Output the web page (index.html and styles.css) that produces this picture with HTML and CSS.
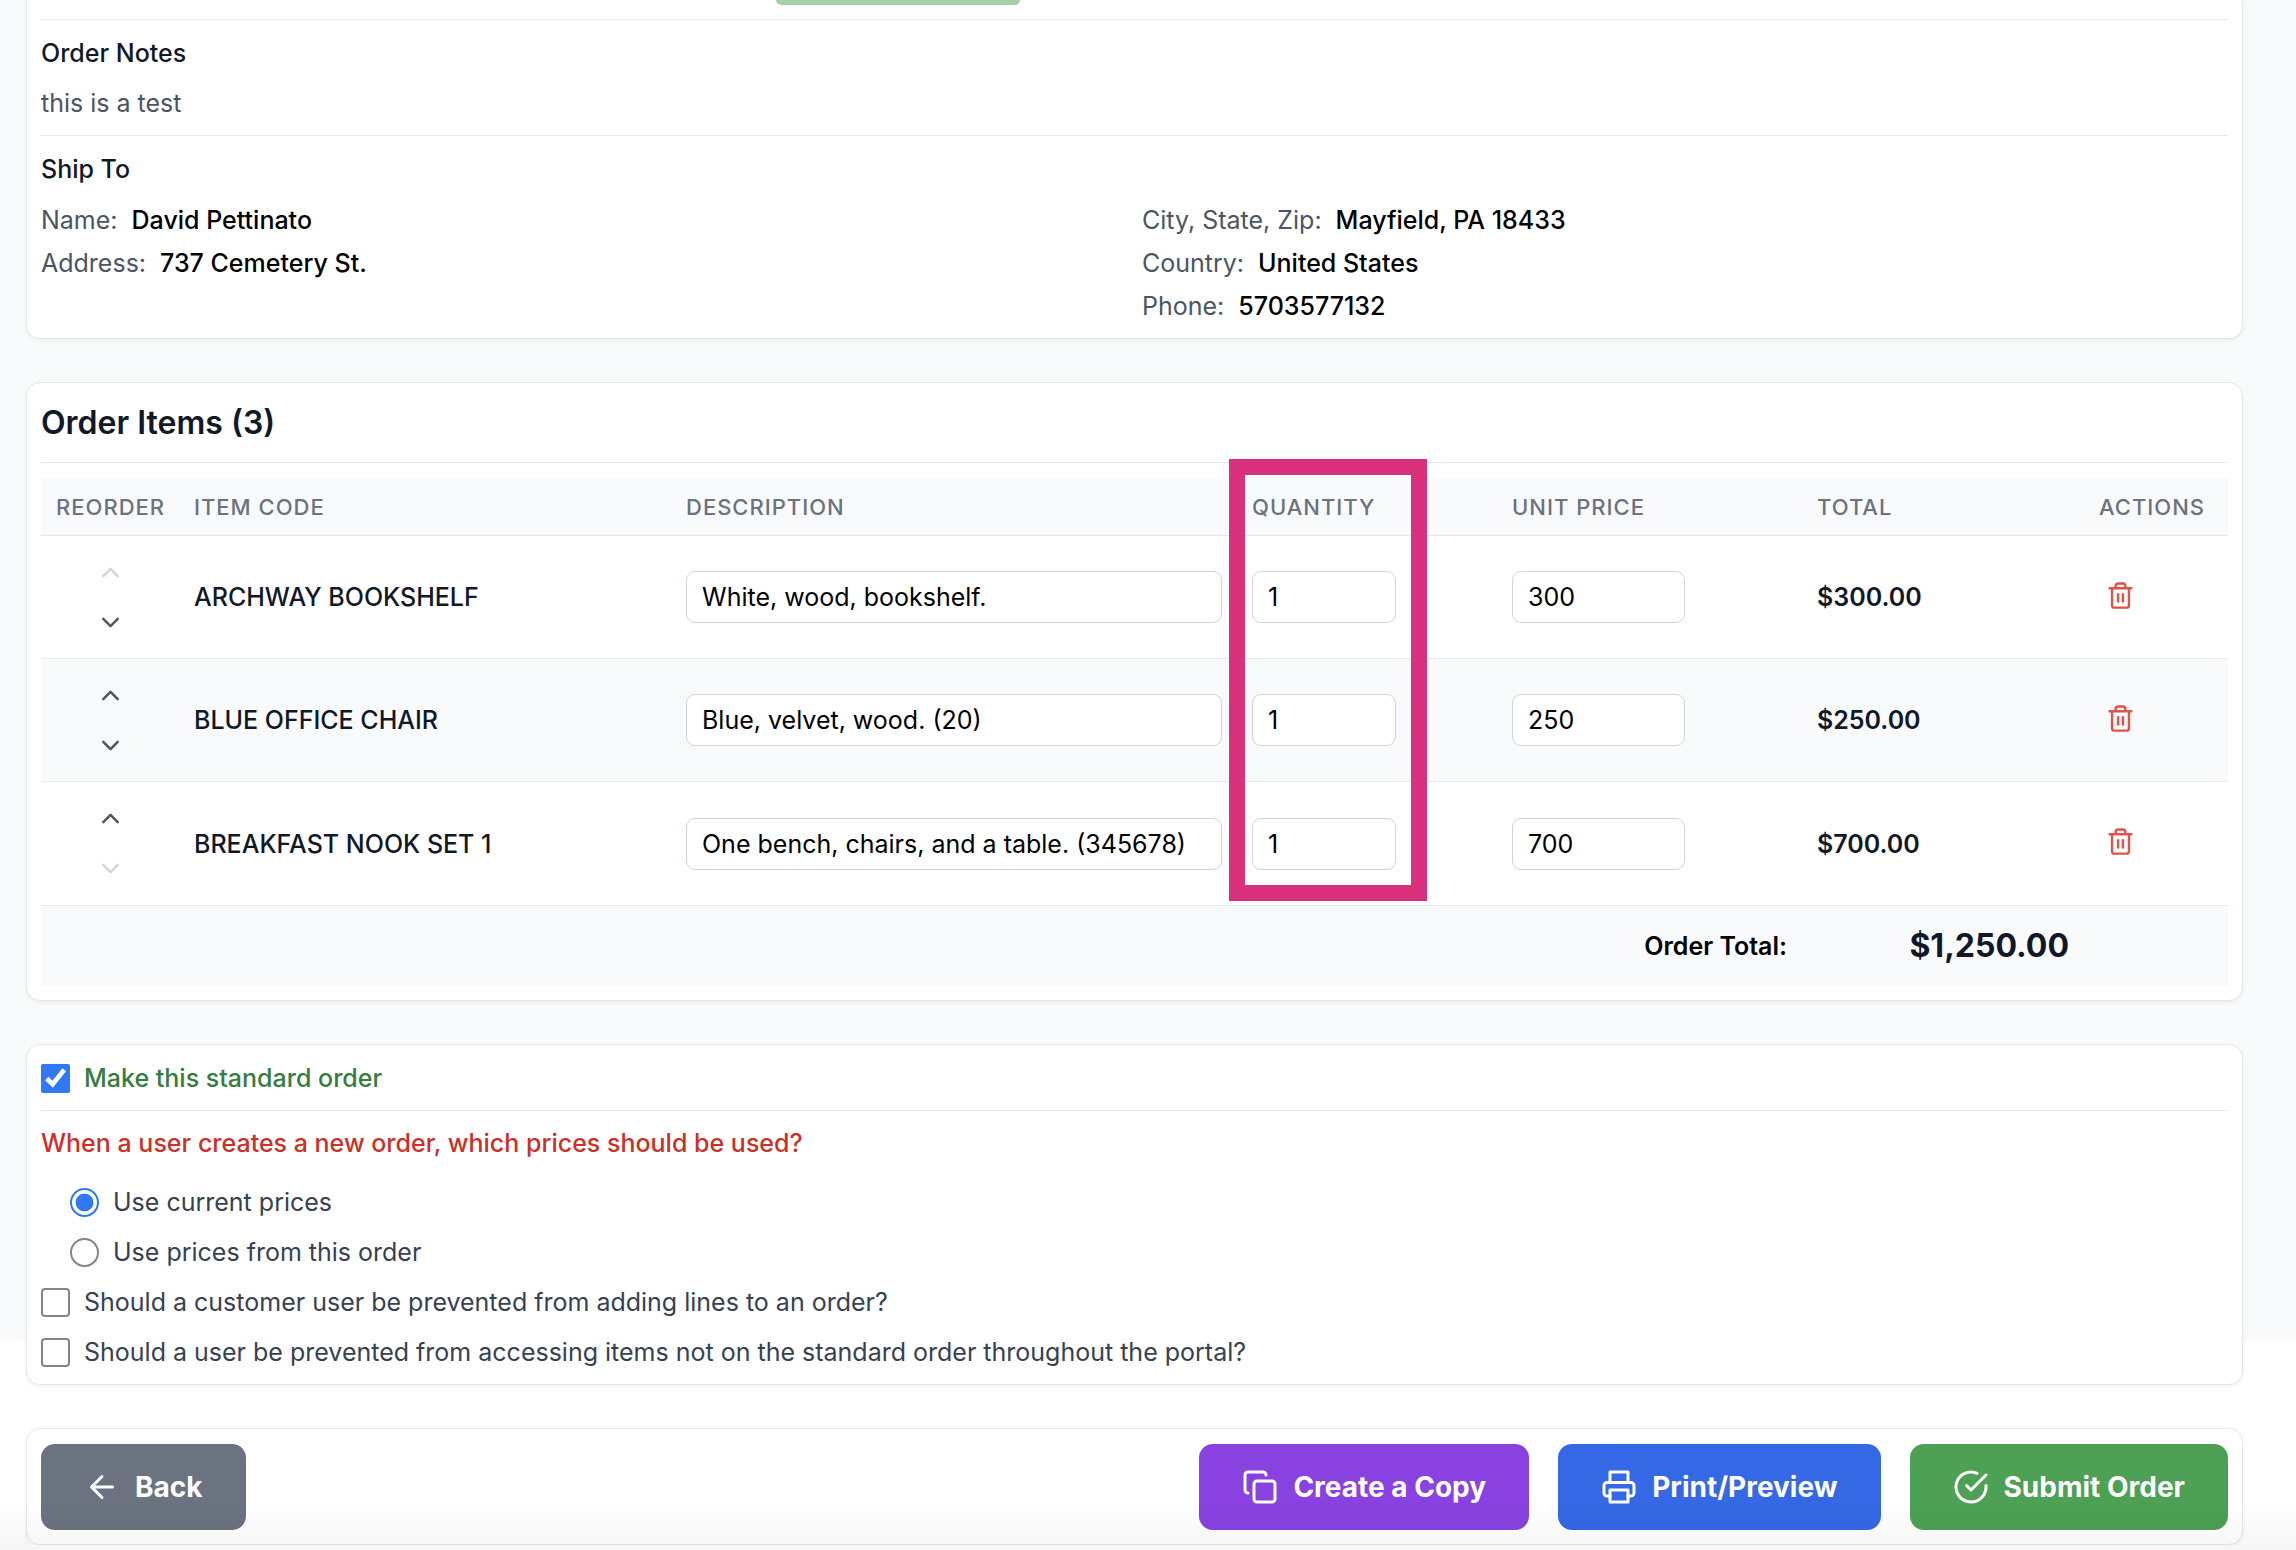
FILE: index.html
```html
<!DOCTYPE html>
<html lang="en">
<head>
<meta charset="utf-8">
<meta name="viewport" content="width=device-width, initial-scale=1">
<title>Order Details</title>
<link rel="stylesheet" href="styles.css">
</head>
<body>
<svg class="sprite" aria-hidden="true">
  <symbol id="up" viewBox="0 0 24 24"><path d="m18 15-6-6-6 6"/></symbol>
  <symbol id="down" viewBox="0 0 24 24"><path d="m6 9 6 6 6-6"/></symbol>
  <symbol id="trash" viewBox="0 0 24 24"><path d="M3 6h18M19 6v14a2 2 0 0 1-2 2H7a2 2 0 0 1-2-2V6M8 6V4a2 2 0 0 1 2-2h4a2 2 0 0 1 2 2v2M10 11v6M14 11v6"/></symbol>
</svg>
<main class="page">
  <section class="card details">
    <div class="status-row"><span class="status"></span></div>
    <div class="block">
      <h3>Order Notes</h3>
      <p class="note">this is a test</p>
    </div>
    <div class="block ship">
      <h3>Ship To</h3>
      <div class="ship-grid">
        <dl>
          <div><dt>Name:</dt><dd>David Pettinato</dd></div>
          <div><dt>Address:</dt><dd>737 Cemetery St.</dd></div>
        </dl>
        <dl>
          <div><dt>City, State, Zip:</dt><dd>Mayfield, PA 18433</dd></div>
          <div><dt>Country:</dt><dd>United States</dd></div>
          <div><dt>Phone:</dt><dd>5703577132</dd></div>
        </dl>
      </div>
    </div>
  </section>

  <section class="card items">
    <h2>Order Items (3)</h2>
    <div class="table-wrap">
      <table>
        <colgroup><col class="c-reorder"><col class="c-code"><col><col class="c-qty"><col class="c-price"><col class="c-total"><col class="c-actions"></colgroup>
        <thead>
          <tr><th>Reorder</th><th>Item Code</th><th>Description</th><th>Quantity</th><th>Unit Price</th><th>Total</th><th>Actions</th></tr>
        </thead>
        <tbody>
          <tr>
            <td><div class="reorder"><button aria-label="Move up" disabled><svg><use href="#up"/></svg></button><button aria-label="Move down"><svg><use href="#down"/></svg></button></div></td>
            <td class="code">ARCHWAY BOOKSHELF</td>
            <td><input class="field desc" type="text" aria-label="Description" value="White, wood, bookshelf."></td>
            <td><input class="field qty" type="text" aria-label="Quantity" value="1"></td>
            <td><input class="field price" type="text" aria-label="Unit price" value="300"></td>
            <td class="total">$300.00</td>
            <td><button class="delete" aria-label="Delete item"><svg><use href="#trash"/></svg></button></td>
          </tr>
          <tr>
            <td><div class="reorder"><button aria-label="Move up"><svg><use href="#up"/></svg></button><button aria-label="Move down"><svg><use href="#down"/></svg></button></div></td>
            <td class="code">BLUE OFFICE CHAIR</td>
            <td><input class="field desc" type="text" aria-label="Description" value="Blue, velvet, wood. (20)"></td>
            <td><input class="field qty" type="text" aria-label="Quantity" value="1"></td>
            <td><input class="field price" type="text" aria-label="Unit price" value="250"></td>
            <td class="total">$250.00</td>
            <td><button class="delete" aria-label="Delete item"><svg><use href="#trash"/></svg></button></td>
          </tr>
          <tr>
            <td><div class="reorder"><button aria-label="Move up"><svg><use href="#up"/></svg></button><button aria-label="Move down" disabled><svg><use href="#down"/></svg></button></div></td>
            <td class="code">BREAKFAST NOOK SET 1</td>
            <td><input class="field desc" type="text" aria-label="Description" value="One bench, chairs, and a table. (345678)"></td>
            <td><input class="field qty" type="text" aria-label="Quantity" value="1"></td>
            <td><input class="field price" type="text" aria-label="Unit price" value="700"></td>
            <td class="total">$700.00</td>
            <td><button class="delete" aria-label="Delete item"><svg><use href="#trash"/></svg></button></td>
          </tr>
        </tbody>
        <tfoot>
          <tr><td colspan="5" class="sum-label">Order Total:</td><td class="sum">$1,250.00</td><td></td></tr>
        </tfoot>
      </table>
      <div class="highlight"></div>
    </div>
  </section>

  <section class="card options">
    <label class="choice standard"><input type="checkbox" checked>Make this standard order</label>
    <fieldset>
      <legend>When a user creates a new order, which prices should be used?</legend>
      <label class="choice nested"><input type="radio" name="prices" checked>Use current prices</label>
      <label class="choice nested"><input type="radio" name="prices">Use prices from this order</label>
    </fieldset>
    <label class="choice"><input type="checkbox">Should a customer user be prevented from adding lines to an order?</label>
    <label class="choice"><input type="checkbox">Should a user be prevented from accessing items not on the standard order throughout the portal?</label>
  </section>

  <section class="card actions">
    <button class="btn back"><svg viewBox="0 0 24 24"><path d="m12 19-7-7 7-7M19 12H5"/></svg>Back</button>
    <button class="btn copy"><svg viewBox="0 0 24 24"><rect x="8" y="8" width="14" height="14" rx="2"/><path d="M4 16c-1.100 0-2-.9-2-2V4c0-1.100.9-2 2-2h10c1.100 0 2 .9 2 2"/></svg>Create a Copy</button>
    <button class="btn print"><svg viewBox="0 0 24 24"><path d="M6 18H4a2 2 0 0 1-2-2v-5a2 2 0 0 1 2-2h16a2 2 0 0 1 2 2v5a2 2 0 0 1-2 2h-2M6 9V2h12v7"/><rect x="6" y="14" width="12" height="8"/></svg>Print/Preview</button>
    <button class="btn submit"><svg viewBox="0 0 24 24"><path d="M22 11.080V12a10 10 0 1 1-5.930-9.140"/><path d="m9 11 3 3L22 4"/></svg>Submit Order</button>
  </section>
</main>
</body>
</html>
```
FILE: styles.css
```css
* { box-sizing: border-box; }

body {
  margin: 0;
  background: linear-gradient(#f9fafc, #f9fafc) no-repeat 0 0 / 100% 1341px #fff;
  color: #111827;
  font: 25px/36px Inter, "Liberation Sans", sans-serif;
}

/* Soft fade along the bottom edge of the window */
body::after {
  content: "";
  position: fixed;
  right: 0;
  bottom: 0;
  left: 0;
  height: 50px;
  background: linear-gradient(rgba(0, 0, 0, 0), rgba(0, 0, 0, .035));
  pointer-events: none;
}

h2, h3, p, dl, dd, fieldset { margin: 0; }
button, input { font: inherit; }
button { border: 0; background: none; }
svg { fill: none; stroke: currentColor; stroke-width: 2; stroke-linecap: round; stroke-linejoin: round; }
.sprite { display: none; }

.page {
  display: flex;
  flex-direction: column;
  gap: 43px;
  padding: 0 53px 0 26px;
}

.card {
  padding: 14px;
  background: #fff;
  border: 1px solid #e5e7eb;
  border-radius: 14px;
  box-shadow: 0 2px 4px rgba(0, 0, 0, .05);
}

/* Order details */
.details { border-top: 0; border-radius: 0 0 14px 14px; padding-top: 0; }
.status-row { height: 19px; padding-left: 735px; }
.status { display: block; width: 244px; height: 5px; background: #a5d1a9; border-radius: 0 0 8px 8px; }
.block { border-top: 1px solid #e5e7eb; padding: 15px 0 14px; }
.ship { padding-bottom: 0; }
h3 { font-size: 25px; font-weight: 500; line-height: 36px; }
.note { margin-top: 14px; color: #4b5563; }
.ship-grid {
  display: grid;
  grid-template-columns: 1fr 1fr;
  gap: 15px;
  margin-top: 15px;
}
dl { display: flex; flex-direction: column; gap: 7px; }
dl div { display: flex; gap: 14px; }
dt { color: #4b5563; }
dd { color: #000; font-weight: 500; }

/* Order items */
h2 {
  padding: 4px 0 17px;
  border-bottom: 1px solid #e5e7eb;
  font-size: 32px;
  font-weight: 600;
  line-height: 44px;
}
.table-wrap { position: relative; margin-top: 15px; }
table { width: 100%; table-layout: fixed; border-collapse: separate; border-spacing: 0; }
.c-reorder { width: 138px; }
.c-code { width: 492px; }
.c-qty { width: 260px; }
.c-price { width: 305px; }
.c-total { width: 282px; }
.c-actions { width: 144px; }
th {
  height: 58px;
  padding: 0 15px;
  background: #f9fafc;
  border-bottom: 1px solid #e5e7eb;
  color: #6b7280;
  font-size: 22px;
  font-weight: 500;
  letter-spacing: 1px;
  text-align: left;
  text-transform: uppercase;
}
td { padding: 0 15px; }
tbody td { height: 123px; border-bottom: 1px solid #e5e7eb; }
tbody tr:last-child td { border-bottom: 0; }
tbody tr:nth-child(2) td { background: #f9fafc; }
.code { font-weight: 500; }
.total { font-weight: 600; }
.reorder { display: flex; flex-direction: column; align-items: center; gap: 7px; }
.reorder button { display: flex; padding: 7px; color: #4b5563; }
.reorder button:disabled { color: #d1d5db; }
.reorder svg { width: 29px; height: 29px; }
.field {
  display: block;
  height: 52px;
  padding: 0 15px;
  background: #fff;
  border: 1px solid #d1d5db;
  border-radius: 9px;
  color: #000;
}
.desc { width: 100%; }
.qty { width: 144px; }
.price { width: 173px; }
.delete { display: flex; padding: 5px 7px 9px; color: #e0524a; }
.delete svg { width: 29px; height: 29px; }
tfoot td { height: 81px; background: #f9fafc; border-top: 1px solid #e5e7eb; text-align: right; }
.sum-label { color: #000; font-weight: 600; }
.sum { font-size: 32px; font-weight: 700; }
.highlight {
  position: absolute;
  top: -19px;
  right: 801px;
  width: 198px;
  height: 442px;
  border: 16px solid #d9317c;
  pointer-events: none;
}

/* Standard order options */
.options { display: flex; flex-direction: column; gap: 14px; padding-top: 15px; color: #374151; }
.choice { display: flex; align-items: center; gap: 14px; }
.choice input { flex: none; width: 29px; height: 29px; margin: 0; accent-color: #2f78f6; }
.choice input:not(:checked),
.choice input[type="radio"] {
  appearance: none;
  border: 2px solid #858585;
  border-radius: 4px;
  background: #fff;
}
.choice input[type="radio"] { border-radius: 50%; }
.choice input[type="radio"]:checked {
  border-color: #2f78f6;
  background: radial-gradient(circle closest-side, #2f78f6 68%, #fff 74%);
}
.standard {
  padding-bottom: 14px;
  border-bottom: 1px solid #e5e7eb;
  color: #347d3f;
  font-weight: 500;
}
fieldset {
  display: flex;
  flex-direction: column;
  gap: 14px;
  padding: 0;
  border: 0;
}
legend { float: left; margin-bottom: 9px; padding: 0; color: #cb3029; font-weight: 500; }
.nested { padding-left: 29px; }

/* Page actions */
.actions { display: flex; gap: 29px; padding-top: 15px; }
.btn {
  display: flex;
  align-items: center;
  gap: 15px;
  height: 86px;
  padding: 0 43px;
  border-radius: 14px;
  color: #fff;
  font-size: 28px;
  font-weight: 700;
}
.btn svg { width: 36px; height: 36px; }
.back { margin-right: auto; background: #6b7280; }
.copy { background: #8942e0; }
.print { background: #3468e4; }
.submit { background: #4da054; }
```
